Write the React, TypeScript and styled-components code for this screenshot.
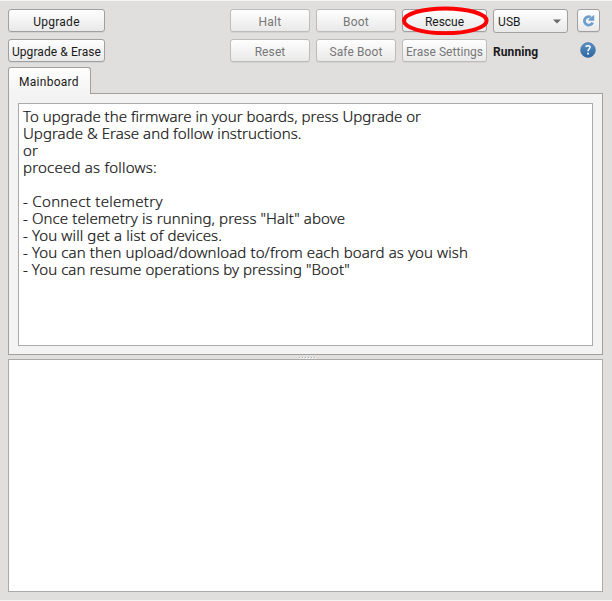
import React from 'react';
import styled, { createGlobalStyle } from 'styled-components';

const GlobalStyle = createGlobalStyle`
  * { box-sizing: border-box; }
  body { margin: 0; background: #e0dfdd; }
`;

const Window = styled.main`
  display: flex;
  flex-direction: column;
  width: 612px;
  height: 601px;
  padding: 8px 9px 8px 8px;
  border-top: 1px solid #f4f4f3;
  border-bottom: 1px solid #f4f4f3;
  background: #e0dfdd;
  color: #1a1a1a;
  font: 12px/14px Roboto, 'Liberation Sans', sans-serif;
  white-space: nowrap;
`;

const Toolbar = styled.header`
  display: grid;
  grid-template-columns: 97px 1fr 80px 80px 85px 75px 27px;
  grid-template-rows: 24px 24px;
  column-gap: 6px;
  row-gap: 6px;
  padding-right: 2px;
  height: 58px;
`;

const Button = styled.button<{ $column: string; $tracking?: number }>`
  grid-column: ${(p) => p.$column};
  display: flex;
  align-items: center;
  justify-content: center;
  height: 23px;
  padding: 2px 0 0;
  border: 1px solid #a0a0a0;
  border-radius: 3px;
  background: linear-gradient(#fefefe, #e9e9e9);
  box-shadow: 0 1px 0 #d3d2d0;
  color: #1a1a1a;
  font: inherit;
  letter-spacing: ${(p) => p.$tracking ?? 0}px;

  &:disabled {
    border-color: #bcbcbb;
    color: #777;
  }
`;

const RescueCell = styled.div`
  grid-column: 5;
  position: relative;
  display: grid;
`;

const Highlight = styled.svg`
  position: absolute;
  left: -1px;
  top: -3px;
  pointer-events: none;
`;

const Select = styled.div`
  grid-column: 6;
  display: flex;
  align-items: center;
  justify-content: space-between;
  height: 24px;
  padding: 1px 6px 0 4px;
  border: 1px solid #a0a0a0;
  border-radius: 3px;
  background: linear-gradient(#fefefe, #e9e9e9);
  letter-spacing: 0.1px;
`;

const IconButton = styled(Button)`
  width: 23px;
  margin-left: 3px;
  padding: 0;
`;

const Status = styled.strong`
  grid-column: 6;
  padding-top: 6px;
  letter-spacing: 0.1px;
`;

const HelpIcon = styled.svg`
  grid-column: 7;
  margin: 3px 0 0 6px;
`;

const TabBar = styled.nav`
  display: flex;
  height: 27px;
  z-index: 1;
`;

const Tab = styled.div`
  width: 83px;
  height: 27px;
  padding: 7px 0 0 10px;
  border: 1px solid #a0a0a0;
  border-bottom: 0;
  border-radius: 3px 3px 0 0;
  background: linear-gradient(#fefefe, #f3f3f3);
  letter-spacing: 0.28px;
`;

const Panel = styled.section`
  height: 262px;
  margin-top: -1px;
  padding: 9px;
  border: 1px solid #a0a0a0;
  background: #f3f3f3;
`;

const Instructions = styled.div`
  height: 243px;
  padding: 4px;
  border: 1px solid #aaa;
  background: #fff;
  color: #111;
  font: 300 15px/17px 'Noto Sans', 'Open Sans', sans-serif;
  -webkit-text-stroke: 0.2px #111;
`;

const Line = styled.p<{ $tracking: number }>`
  height: 17px;
  margin: 0;
  letter-spacing: ${(p) => p.$tracking}px;
`;

const Splitter = styled.div`
  display: flex;
  justify-content: center;
  gap: 1px;
  height: 4px;
  padding: 2px 0 0 4px;
`;

const Grip = styled.i`
  width: 2px;
  height: 2px;
  background: linear-gradient(#aaa, #aaa) 0 0 / 1px 1px no-repeat #f2f2f2;
`;

const Log = styled.section`
  height: 233px;
  border: 1px solid #aaa;
  background: #fff;
`;

const lines: [string, number][] = [
  ['To upgrade the firmware in your boards, press Upgrade or', 0.02],
  ['Upgrade & Erase and follow instructions.', 0.04],
  ['or', 0.1],
  ['proceed as follows:', 0.22],
  ['', 0],
  ['- Connect telemetry', 0.3],
  ['- Once telemetry is running, press "Halt" above', 0.1],
  ['- You will get a list of devices.', 0.11],
  ['- You can then upload/download to/from each board as you wish', 0.105],
  ['- You can resume operations by pressing "Boot"', 0.07],
];

export default function App() {
  return (
    <>
      <GlobalStyle />
      <Window>
        <Toolbar>
          <Button $column="1" $tracking={0.25}>Upgrade</Button>
          <Button $column="3" $tracking={0.3} disabled>Halt</Button>
          <Button $column="4" $tracking={0.2} disabled>Boot</Button>
          <RescueCell>
            <Button $column="1">Rescue</Button>
            <Highlight width="88" height="29" viewBox="0 0 88 29">
              <ellipse cx="44.3" cy="14.8" rx="41.3" ry="12.4" fill="none" stroke="#f00" strokeWidth="4" />
            </Highlight>
          </RescueCell>
          <Select>
            USB
            <svg width="8" height="5" viewBox="0 0 8 5"><path d="M0 0.5h8L4 4.5z" fill="#686868" /></svg>
          </Select>
          <IconButton $column="7" aria-label="Refresh">
            <svg width="13" height="13" viewBox="0 0 13 13">
              <path d="M10.6 8.4A4.2 4.2 0 1 1 8.8 3.3" fill="none" stroke="#6d9fce" strokeWidth="2.8" />
              <path d="M12.2 0.8v6H6.4V5.4z" fill="#6d9fce" />
            </svg>
          </IconButton>
          <Button $column="1" $tracking={0.08}>Upgrade &amp; Erase</Button>
          <Button $column="3" $tracking={0.1} disabled>Reset</Button>
          <Button $column="4" $tracking={0.12} disabled>Safe Boot</Button>
          <Button $column="5" $tracking={0.05} disabled>Erase Settings</Button>
          <Status>Running</Status>
          <HelpIcon width="16" height="16" viewBox="0 0 16 16">
            <defs>
              <linearGradient id="help" x2="0" y2="1">
                <stop stopColor="#5b91c4" />
                <stop offset="1" stopColor="#2c65a0" />
              </linearGradient>
            </defs>
            <circle cx="8" cy="8" r="7.4" fill="url(#help)" stroke="#3a6fa5" strokeWidth="0.6" />
            <path d="M5.5 4.7Q8 3 9.8 4.4C11.4 6.2 8 6.9 8 9.3" fill="none" stroke="#fff" strokeWidth="1.5" />
            <path d="M7.1 10.7h1.8v1.9H7.1z" fill="#fff" />
          </HelpIcon>
        </Toolbar>
        <TabBar><Tab>Mainboard</Tab></TabBar>
        <Panel>
          <Instructions>
            {lines.map(([text, tracking], i) => <Line key={i} $tracking={tracking}>{text}</Line>)}
          </Instructions>
        </Panel>
        <Splitter>{[0, 1, 2, 3, 4, 5].map((i) => <Grip key={i} />)}</Splitter>
        <Log />
      </Window>
    </>
  );
}
